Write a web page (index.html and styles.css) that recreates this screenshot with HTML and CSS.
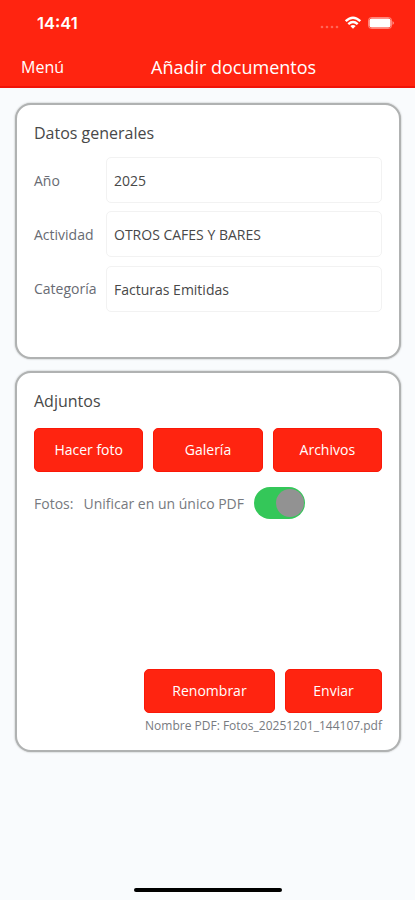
FILE: index.html
```html
<!DOCTYPE html>
<html lang="es">
<head>
<meta charset="utf-8">
<meta name="viewport" content="width=device-width, initial-scale=1">
<title>Añadir documentos</title>
<link rel="stylesheet" href="styles.css">
</head>
<body>
<header class="header">
  <div class="status">
    <span class="time">14:41</span>
    <svg class="status-icons" width="76" height="16" viewBox="0 0 76 16">
      <g fill="#fff" opacity=".3"><circle cx="2" cy="12" r="1.3"/><circle cx="7" cy="12" r="1.3"/><circle cx="12" cy="12" r="1.3"/><circle cx="17" cy="12" r="1.3"/></g>
      <g fill="none" stroke="#fff" stroke-width="2.4"><path d="M25.700 6.200Q33 -.8 40.300 6.200"/><path d="M28.300 9.200Q33 5 37.700 9.200"/></g>
      <path d="M30.300 11Q33 8.800 35.700 11L33 13.700Z" fill="#fff"/>
      <rect x="48.500" y="2.500" width="23" height="11" rx="3" fill="none" stroke="#fff" opacity=".45"/>
      <rect x="49.500" y="3.500" width="21" height="9" rx="2" fill="#fff"/>
      <path d="M72.500 6Q75.500 8 72.500 10Z" fill="#fff" opacity=".5"/>
    </svg>
  </div>
  <nav class="nav">
    <a class="menu">Menú</a>
    <h1 class="title">Añadir documentos</h1>
  </nav>
</header>
<main class="content">
  <section class="card general">
    <h2 class="heading">Datos generales</h2>
    <div class="fields">
      <span class="label">Año</span><div class="input">2025</div>
      <span class="label">Actividad</span><div class="input">OTROS CAFES Y BARES</div>
      <span class="label">Categoría</span><div class="input">Facturas Emitidas</div>
    </div>
  </section>
  <section class="card attachments">
    <h2 class="heading">Adjuntos</h2>
    <div class="sources">
      <button class="button">Hacer foto</button>
      <button class="button">Galería</button>
      <button class="button">Archivos</button>
    </div>
    <div class="option">
      <span class="photos">Fotos:</span>
      <span class="merge">Unificar en un único PDF</span>
      <span class="toggle"><span class="thumb"></span></span>
    </div>
    <div class="actions">
      <button class="button">Renombrar</button>
      <button class="button">Enviar</button>
    </div>
    <p class="filename">Nombre PDF: Fotos_20251201_144107.pdf</p>
  </section>
</main>
<div class="home-bar"></div>
</body>
</html>
```
FILE: styles.css
```css
* { box-sizing: border-box; }
body {
  margin: 0;
  height: 900px;
  display: flex;
  flex-direction: column;
  background: #f9fbfd;
  color: #484848;
  font-family: "Open Sans", sans-serif;
  overflow: hidden;
}
h1, h2, p { margin: 0; font-weight: 400; }
.header {
  height: 88px;
  background: #ff2410;
  border-bottom: 2px solid #f01308;
  color: #fff;
}
.status {
  height: 46px;
  padding: 0 19px 0 37px;
  display: flex;
  align-items: center;
  justify-content: space-between;
}
.time { font: 600 16.500px/20px Inter, sans-serif; letter-spacing: 0; }
.status-icons { display: block; }
.nav {
  height: 42px;
  display: grid;
  grid-template-columns: 130px 1fr;
  padding-left: 21px;
  line-height: 42px;
}
.menu { font-size: 16px; }
.title { font-size: 18px; }
.content {
  flex: 1;
  padding: 15px 14px 0 15px;
  display: flex;
  flex-direction: column;
  gap: 12px;
}
.card {
  background: #fff;
  border: 2px solid #b0b2b2;
  border-radius: 16px;
  padding: 16px 17px 0;
  box-shadow: 0 0 2px #a8aaaa;
}
.general { height: 256px; }
.attachments {
  height: 381px;
  display: flex;
  flex-direction: column;
}
.heading { font-size: 16px; line-height: 24px; }
.fields {
  margin-top: 12px;
  display: grid;
  grid-template-columns: 72px 1fr;
  grid-auto-rows: 46px;
  row-gap: 8.300px;
  align-items: center;
}
.label { font-size: 14px; color: #686b73; }
.input {
  height: 46px;
  border: 1px solid #f2f2f2;
  border-radius: 5px;
  padding-left: 7px;
  font-size: 14px;
  line-height: 45px;
}
.sources {
  margin-top: 15px;
  display: grid;
  grid-template-columns: repeat(3, 1fr);
  gap: 10px;
}
.button {
  height: 44px;
  padding: 0;
  border: 1px solid #fa1808;
  border-radius: 5px;
  background: #ff2410;
  color: #fff;
  font: 400 14px/20px "Open Sans", sans-serif;
}
.option {
  height: 32px;
  margin-top: 15px;
  display: flex;
  align-items: center;
  color: #777a80;
  font-size: 14px;
}
.merge { margin-left: 10px; }
.toggle {
  width: 51px;
  height: 32px;
  margin-left: 10px;
  padding: 2px 1px;
  border-radius: 16px;
  background: #34c759;
  display: flex;
  justify-content: flex-end;
}
.thumb { width: 28px; height: 28px; border-radius: 50%; background: #929292; }
.actions {
  margin-top: auto;
  display: grid;
  grid-template-columns: 131px 97px;
  justify-content: end;
  gap: 10px;
}
.filename {
  margin: 3px 0 14px;
  text-align: right;
  color: #777a80;
  font-size: 12px;
  line-height: 20px;
}
.home-bar {
  width: 148px;
  height: 4px;
  margin: 0 auto 8px;
  border-radius: 2px;
  background: #000;
}
```
